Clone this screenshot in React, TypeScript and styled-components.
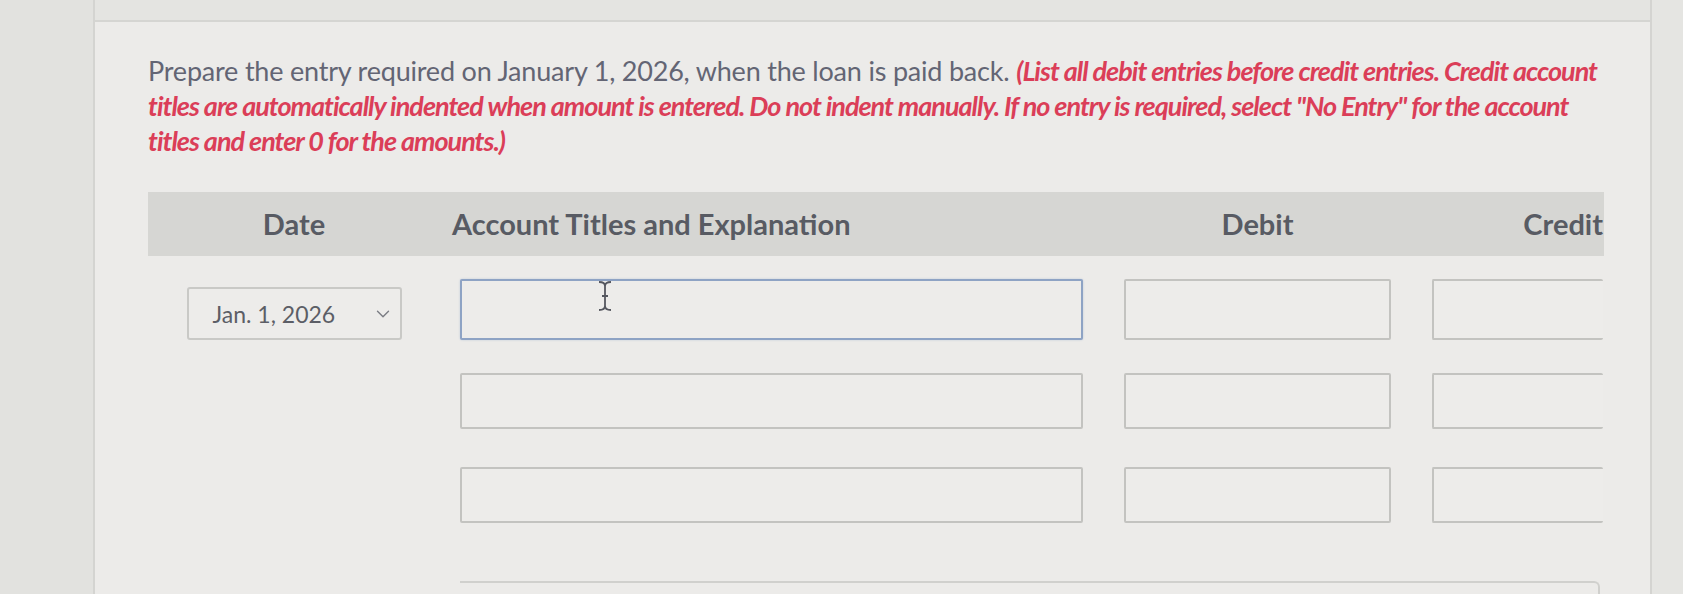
import styled, { createGlobalStyle } from 'styled-components';
import { ChevronDown } from 'lucide-react';

const GlobalStyle = createGlobalStyle`
  html, body {
    margin: 0;
    padding: 0;
    background: #e2e2df;
    font-family: Lato, "Open Sans", sans-serif;
  }
`;

const Page = styled.div`
  display: flex;
  height: 594px;
  overflow: hidden;
`;

const Gutter = styled.div<{ width: number; side: 'left' | 'right' }>`
  width: ${(p) => p.width}px;
  flex-shrink: 0;
  background: ${(p) => (p.side === 'left' ? '#e2e2df' : '#e5e5e2')};
  border-${(p) => (p.side === 'left' ? 'right' : 'left')}: 2px solid #d4d4d1;
`;

const Card = styled.div`
  flex: 1;
  display: flex;
  flex-direction: column;
  background: #ecebe9;
  min-width: 0;
`;

const TopStrip = styled.div`
  height: 20px;
  flex-shrink: 0;
  background: #e4e4e1;
  border-bottom: 2px solid #d5d5d2;
`;

const Content = styled.div`
  flex-shrink: 0;
  padding-left: 53px;
`;

const Prompt = styled.p`
  margin: 31px 0 0;
  width: 1470px;
  font-size: 27px;
  line-height: 35px;
  color: #636574;
  letter-spacing: -0.2px;
`;

const Note = styled.em`
  font-weight: 700;
  color: #db3e58;
  letter-spacing: -1px;
`;

const Table = styled.div`
  margin-top: 34px;
  width: 1456px;
`;

const Grid = styled.div`
  display: grid;
  grid-template-columns: 271px 623px 267px 171px;
  column-gap: 41px;
`;

const HeaderRow = styled(Grid)`
  height: 64px;
  align-items: center;
  background: #d6d6d3;
`;

const HeaderCell = styled.div<{ align: 'left' | 'center' | 'right'; shift?: number }>`
  text-align: ${(p) => p.align};
  margin-left: ${(p) => p.shift || 0}px;
  font-size: 29px;
  font-weight: 700;
  color: #585b63;
  margin-top: -2px;
  white-space: nowrap;
`;

const Body = styled.div`
  display: flex;
  flex-direction: column;
  gap: 38px;
  margin-top: 23px;
`;

const Row = styled(Grid)`
  height: 56px;
  align-items: stretch;
`;

const Cell = styled.div<{ center?: boolean; shift?: number }>`
  display: flex;
  justify-content: ${(p) => (p.center ? 'center' : 'stretch')};
  padding-left: ${(p) => p.shift || 0}px;
  position: relative;
`;

const Select = styled.div`
  width: 215px;
  height: 53px;
  margin-top: 8px;
  box-sizing: border-box;
  border: 2px solid #c9c9c6;
  border-radius: 3px;
  display: flex;
  align-items: center;
  justify-content: space-between;
  padding: 0 6px 0 24px;
  font-size: 23px;
  color: #5c5e66;
  background: #edecea;
`;

const Input = styled.div<{ active?: boolean; openRight?: boolean }>`
  flex: 1;
  box-sizing: border-box;
  border: 2px solid ${(p) => (p.active ? '#8ea3c4' : '#c3c3c0')};
  border-right-width: ${(p) => (p.openRight ? 0 : 2)}px;
  border-radius: 2px;
  background: #edecea;
  box-shadow: ${(p) => (p.active ? '0 0 2px rgba(120,150,200,0.45)' : 'none')};
`;

const Cursor = styled.svg`
  position: absolute;
  left: 137px;
  top: 1px;
`;

const BottomBox = styled.div`
  margin: 58px 0 0 312px;
  width: 1138px;
  height: 30px;
  border-top: 2px solid #d0d0cd;
  border-right: 2px solid #d0d0cd;
  border-top-right-radius: 6px;
`;

const IBeam = () => (
  <Cursor width="16" height="32" viewBox="0 0 16 32">
    <path
      d="M2 2 Q8 2 8 6 Q8 2 14 2 M8 6 V26 M2 30 Q8 30 8 26 Q8 30 14 30 M5 16 H11"
      fill="none"
      stroke="#55575f"
      strokeWidth="1.8"
    />
  </Cursor>
);

const rows = [0, 1, 2];

export default function App() {
  return (
    <>
      <GlobalStyle />
      <Page>
        <Gutter width={93} side="left" />
        <Card>
          <TopStrip />
          <Content>
            <Prompt>
              Prepare the entry required on January 1, 2026, when the loan is paid back.{' '}
              <Note>
                (List all debit entries before credit entries. Credit account titles are automatically
                indented when amount is entered. Do not indent manually. If no entry is required, select
                "No Entry" for the account titles and enter 0 for the amounts.)
              </Note>
            </Prompt>
            <Table>
              <HeaderRow>
                <HeaderCell align="center" shift={21}>
                  Date
                </HeaderCell>
                <HeaderCell align="left" shift={-8}>
                  Account Titles and Explanation
                </HeaderCell>
                <HeaderCell align="center">Debit</HeaderCell>
                <HeaderCell align="right">Credit</HeaderCell>
              </HeaderRow>
              <Body>
                {rows.map((i) => (
                  <Row key={i}>
                    <Cell center shift={21}>
                      {i === 0 && (
                        <Select>
                          <span>Jan. 1, 2026</span>
                          <ChevronDown size={22} color="#7a7c83" strokeWidth={1.5} />
                        </Select>
                      )}
                    </Cell>
                    <Cell>
                      <Input active={i === 0} />
                      {i === 0 && <IBeam />}
                    </Cell>
                    <Cell>
                      <Input />
                    </Cell>
                    <Cell>
                      <Input openRight />
                    </Cell>
                  </Row>
                ))}
              </Body>
            </Table>
            <BottomBox />
          </Content>
        </Card>
        <Gutter width={31} side="right" />
      </Page>
    </>
  );
}
